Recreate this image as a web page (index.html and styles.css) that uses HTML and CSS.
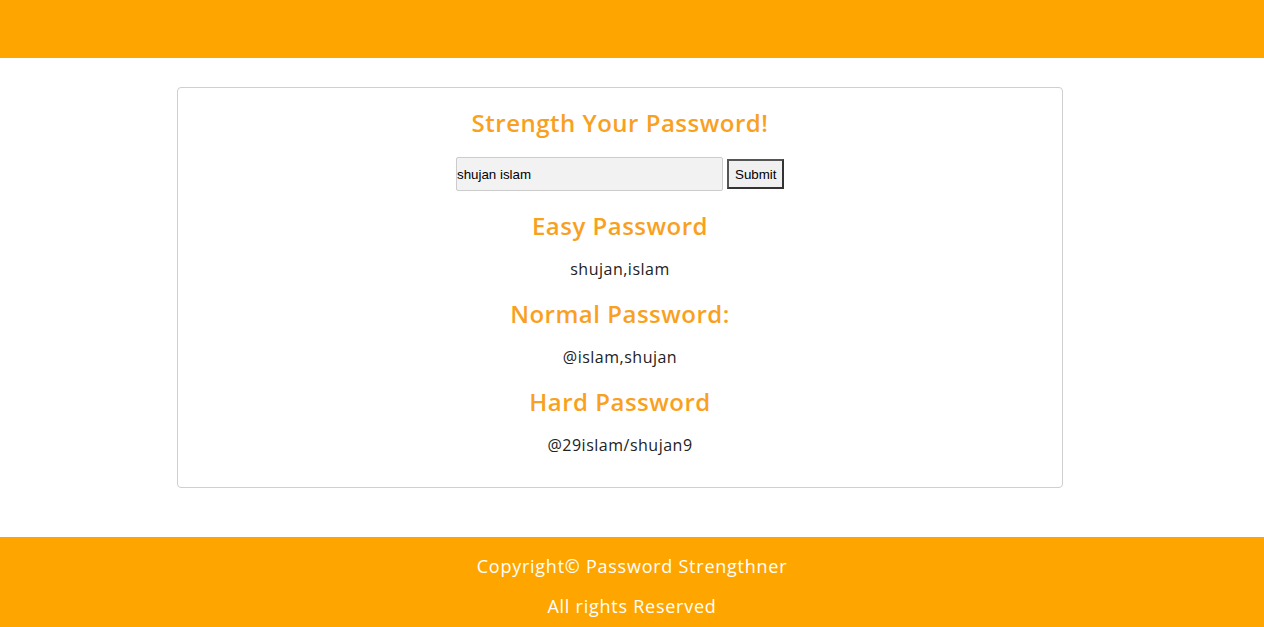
FILE: index.html
```html
<!DOCTYPE html>
<html lang="en">
<head>
<meta charset="utf-8">
<title>Password Strengthner</title>
<link rel="stylesheet" href="styles.css">
</head>
<body>
<header class="topbar"></header>
<main class="main">
  <section class="card">
    <h1 class="title">Strength Your Password!</h1>
    <form class="form">
      <input class="field" type="text" value="shujan islam">
      <button class="btn" type="button">Submit</button>
    </form>
    <h2 class="label">Easy Password</h2>
    <p class="result">shujan,islam</p>
    <h2 class="label">Normal Password:</h2>
    <p class="result">@islam,shujan</p>
    <h2 class="label">Hard Password</h2>
    <p class="result">@29islam/shujan9</p>
  </section>
</main>
<footer class="footer">
  <p class="foot-line">Copyright© Password Strengthner</p>
  <p class="foot-line">All rights Reserved</p>
</footer>
</body>
</html>
```

FILE: styles.css
```css
html, body {
  margin: 0;
  padding: 0;
  background: #ffffff;
}
body {
  font-family: "Open Sans", "DejaVu Sans", sans-serif;
  color: #222;
}
.topbar {
  height: 58px;
  background: #ffa500;
}
.main {
  padding-top: 29px;
  padding-bottom: 49px;
}
.card {
  width: 884px;
  margin-left: 177px;
  border: 1px solid #cfcfcf;
  border-radius: 4px;
  padding: 20px 0 32px;
  display: flex;
  flex-direction: column;
  align-items: center;
  text-align: center;
}
.title {
  margin: 0;
  font-size: 24px;
  line-height: 30px;
  font-weight: 600;
  letter-spacing: 0.5px;
  color: #f9a11f;
}
.form {
  margin-top: 19px;
  display: flex;
  align-items: center;
  gap: 4px;
  height: 34px;
}
.field {
  box-sizing: border-box;
  width: 267px;
  height: 34px;
  border: 1px solid #cccccc;
  border-radius: 2px;
  background: #f2f2f2;
  font-family: "Liberation Sans", Arial, sans-serif;
  font-size: 13.33px;
  color: #000;
  padding: 0 1px 0 0;
  outline: none;
}
.btn {
  box-sizing: border-box;
  height: 30px;
  width: 57px;
  border: 2px solid #333;
  border-top-color: #555;
  border-left-color: #555;
  background: #f0f0f0;
  font-family: "Liberation Sans", Arial, sans-serif;
  font-size: 13.33px;
  color: #000;
  padding: 0 6px;
}
.label {
  margin: 20px 0 0;
  font-size: 24px;
  line-height: 30px;
  font-weight: 600;
  letter-spacing: 0.5px;
  color: #f9a11f;
}
.result {
  margin: 18px 0 0;
  font-size: 16px;
  line-height: 20px;
  letter-spacing: 0.5px;
  color: #222;
}
.footer {
  background: #ffa500;
  padding: 19px 0 21px;
  text-align: center;
}
.foot-line {
  margin: 0;
  font-size: 18px;
  line-height: 20px;
  letter-spacing: 0.75px;
  color: #ffffff;
}
.foot-line + .foot-line {
  margin-top: 20px;
}
```
